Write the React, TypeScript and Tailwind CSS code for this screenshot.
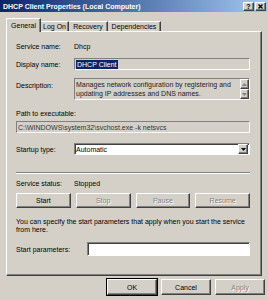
import React from 'react';

const raised =
  'border border-t-white border-l-white border-r-[#404040] border-b-[#404040] shadow-[inset_-1px_-1px_#808080] bg-[#d4d0c8]';
const readOnly =
  'border border-t-[#808080] border-l-[#808080] border-r-white border-b-white bg-[#d4d0c8]';
const whiteField =
  'border border-t-[#808080] border-l-[#808080] border-r-white border-b-white shadow-[inset_1px_1px_#404040] bg-white';
const disabledText = 'text-[#808080] [text-shadow:1px_1px_0_#fff]';

function Arrow({ up, color = '#000' }: { up?: boolean; color?: string }) {
  return (
    <svg width="5" height="3" viewBox="0 0 5 3">
      <path d={up ? 'M2.5 0 L5 3 L0 3 Z' : 'M0 0 L5 0 L2.5 3 Z'} fill={color} />
    </svg>
  );
}

function Tab({ label, width, active }: { label: string; width: number; active?: boolean }) {
  return (
    <div
      style={{ width }}
      className={
        active
          ? 'h-[14px] flex items-start pt-[3px] justify-center bg-[#d4d0c8] border-t border-l border-r border-t-white border-l-white border-r-[#404040] shadow-[inset_-1px_0_#808080]'
          : 'h-[10px] mb-[1px] flex items-center justify-center bg-[#d4d0c8] border-t border-r border-t-white border-r-[#404040] shadow-[inset_-1px_0_#808080]'
      }
    >
      <span className="leading-[8px]">{label}</span>
    </div>
  );
}

function Button({ label, disabled, isDefault }: { label: string; disabled?: boolean; isDefault?: boolean }) {
  return (
    <div
      className={`h-full flex items-center justify-center ${raised} ${isDefault ? 'outline outline-1 outline-black' : ''}`}
    >
      <span className={disabled ? disabledText : ''}>{label}</span>
    </div>
  );
}

export default function App() {
  return (
    <div
      className="w-[268px] h-[300px] bg-[#d4d0c8] overflow-hidden text-[7px] leading-[9px] text-black"
      style={{ fontFamily: '"Liberation Sans", Arial, sans-serif' }}
    >
      {/* title bar */}
      <div className="h-[12px] flex items-center pl-[3px] pr-[2px] bg-gradient-to-r from-[#0a246a] to-[#a6caf0]">
        <span className="flex-1 font-bold text-white">DHCP Client Properties (Local Computer)</span>
        <div className={`w-[11px] h-[9px] flex items-center justify-center font-bold text-[7px] ${raised}`}>?</div>
        <div className={`w-[11px] h-[9px] ml-[1px] flex items-center justify-center ${raised}`}>
          <svg width="5" height="5" viewBox="0 0 5 5">
            <path d="M0.5 0.5 L4.5 4.5 M4.5 0.5 L0.5 4.5" stroke="#000" strokeWidth="1.3" />
          </svg>
        </div>
      </div>

      {/* tabs */}
      <div className="relative z-10 mt-[6px] ml-[6px] h-[14px] flex items-end">
        <Tab label="General" width={35} active />
        <Tab label="Log On" width={28} />
        <Tab label="Recovery" width={39} />
        <Tab label="Dependencies" width={53} />
      </div>

      {/* panel */}
      <div className="-mt-[1px] ml-[6px] w-[256px] h-[245px] pl-[9px] pr-[11px] border border-t-white border-l-white border-r-[#404040] border-b-[#404040] shadow-[inset_-1px_-1px_#808080]">
        <div className="mt-[8px] h-[12px] flex items-center">
          <span className="w-[58px]">Service name:</span>
          <span>Dhcp</span>
        </div>

        <div className="mt-[6px] h-[12px] flex items-center">
          <span className="w-[58px]">Display name:</span>
          <div className={`flex-1 h-full flex items-center pl-[1px] ${readOnly}`}>
            <span className="bg-[#0a246a] text-white px-[1px]">DHCP Client</span>
          </div>
        </div>

        <div className="mt-[8px] h-[22px] flex">
          <span className="w-[58px] pt-[3px]">Description:</span>
          <div className={`flex-1 h-full flex ${readOnly}`}>
            <div className="flex-1 pl-[1px] pt-[1px] leading-[9px] text-[#222]">
              Manages network configuration by registering and
              <br />
              updating IP addresses and DNS names.
            </div>
            <div className="w-[9px] flex flex-col">
              <div className={`h-[10px] flex items-center justify-center ${raised}`}>
                <Arrow up color="#808080" />
              </div>
              <div className={`h-[10px] flex items-center justify-center ${raised}`}>
                <Arrow color="#808080" />
              </div>
            </div>
          </div>
        </div>

        <div className="mt-[7px] h-[12px] flex items-center">Path to executable:</div>
        <div className={`mt-[2px] h-[12px] flex items-center pl-[1px] text-[#333] ${readOnly}`}>
          C:\WINDOWS\system32\svchost.exe -k netsvcs
        </div>

        <div className="mt-[10px] h-[12px] flex items-center">
          <span className="w-[58px]">Startup type:</span>
          <div className={`flex-1 h-full flex items-center pl-[1px] ${whiteField}`}>
            <span className="flex-1">Automatic</span>
            <div className={`w-[10px] h-[10px] mr-[1px] flex items-center justify-center ${raised}`}>
              <Arrow />
            </div>
          </div>
        </div>

        <div className="mt-[17px] h-[2px] border-t border-t-[#808080] border-b border-b-white" />

        <div className="mt-[3px] h-[12px] flex items-center">
          <span className="w-[58px]">Service status:</span>
          <span>Stopped</span>
        </div>

        <div className="mt-[4px] h-[15px] grid grid-cols-4 gap-[5px]">
          <Button label="Start" />
          <Button label="Stop" disabled />
          <Button label="Pause" disabled />
          <Button label="Resume" disabled />
        </div>

        <p className="mt-[10px] leading-[8px]">
          You can specify the start parameters that apply when you start the service
          <br />
          from here.
        </p>

        <div className="mt-[8px] h-[14px] flex items-center">
          <span className="w-[71px]">Start parameters:</span>
          <div className={`flex-1 h-full ${whiteField}`} />
        </div>
      </div>

      {/* dialog buttons */}
      <div className="mt-[3px] ml-[107px] h-[16px] flex gap-[4px]">
        <div className="w-[50px] h-full">
          <Button label="OK" isDefault />
        </div>
        <div className="w-[50px] h-full">
          <Button label="Cancel" />
        </div>
        <div className="w-[50px] h-full">
          <Button label="Apply" disabled />
        </div>
      </div>
    </div>
  );
}
